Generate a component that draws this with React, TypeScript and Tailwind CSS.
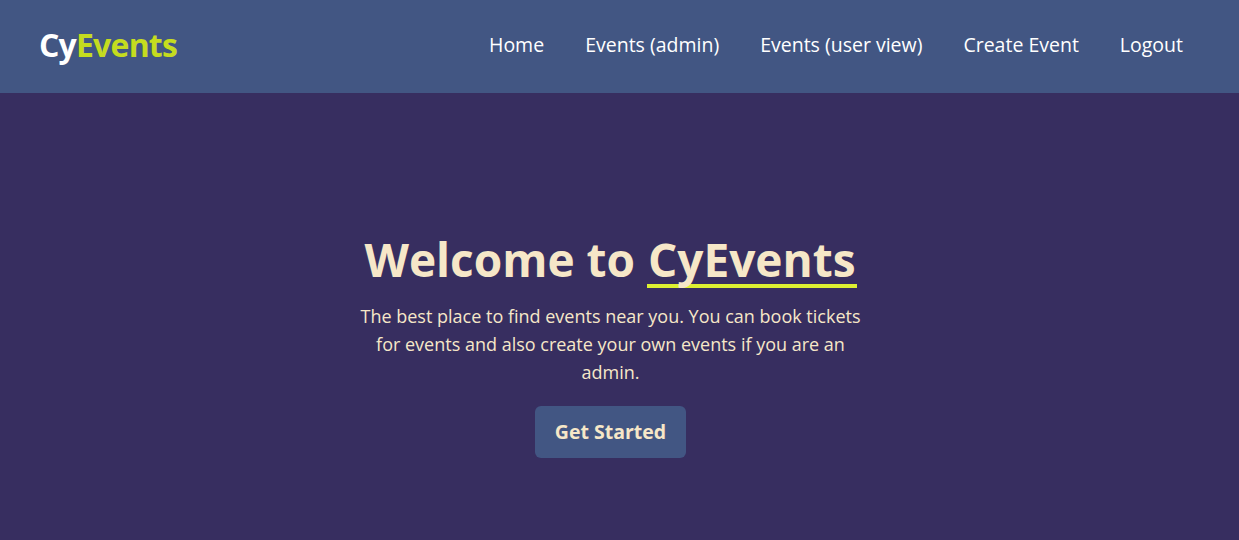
export default function App() {
  const links = ['Home', 'Events (admin)', 'Events (user view)', 'Create Event', 'Logout'];
  return (
    <div className="min-h-[540px] bg-[#372e60]" style={{ fontFamily: '"Open Sans", sans-serif' }}>
      {/* Header */}
      <header className="h-[93px] bg-[#425683] flex items-center justify-between pl-[39px] pr-[56px]">
        <div className="text-[32px] font-bold tracking-tight leading-none -mt-[4px]">
          <span className="text-white">Cy</span>
          <span className="text-[#c5dc1f]">Events</span>
        </div>
        <nav className="flex items-center gap-[41px] text-[19.5px] text-white -mt-[4px]">
          {links.map((l) => (
            <a key={l} href="#" className="hover:underline">
              {l}
            </a>
          ))}
        </nav>
      </header>

      {/* Hero */}
      <main className="flex flex-col items-center pt-[138px] pr-[18px] text-[#f6e7c8]">
        <h1 className="text-[46px] font-bold leading-[56px]">
          Welcome to{' '}
          <span className="inline-block leading-none border-b-4 border-[#dcf032] px-[1px] pb-[2px]">CyEvents</span>
        </h1>
        <p className="mt-[14px] w-[510px] text-center text-[18px] leading-[28px] font-medium">
          The best place to find events near you. You can book tickets for events and also create your own events if you are an admin.
        </p>
        <button className="mt-[20px] h-[52px] px-[20px] rounded-md bg-[#425683] text-[19.5px] font-bold text-[#f6e7c8]">
          Get Started
        </button>
      </main>
    </div>
  );
}
